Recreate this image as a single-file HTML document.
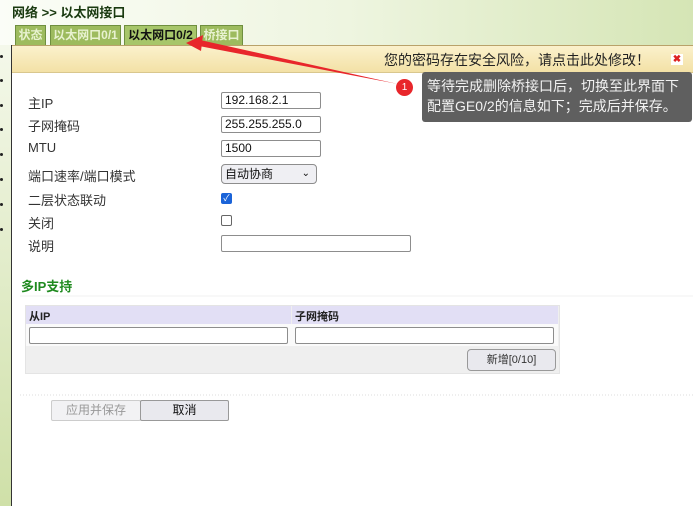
<!DOCTYPE html>
<html><head><meta charset="utf-8"><style>
*{box-sizing:border-box;margin:0;padding:0}
body{width:693px;height:506px;overflow:hidden;position:relative;background:#fff;font-family:"Liberation Sans","Noto Sans CJK SC",sans-serif;font-size:13px;color:#333}
.top{position:absolute;left:0;top:0;width:693px;height:45px;background:linear-gradient(90deg,#fbfdf7 0%,#eef5e0 50%,#d5e5b5 100%)}
.title{position:absolute;left:12px;top:2px;font-weight:bold;font-size:13px;color:#1a3a10}
.left{position:absolute;left:0;top:45px;width:12px;height:461px;background:linear-gradient(180deg,#f4f8ea,#cfe0a8);border-right:1px solid #333}
.dot{position:absolute;left:0;width:3px;height:3px;background:#222;border-radius:50%}
.tab{position:absolute;top:25px;height:20px;background:#9dbb5e;border:1px solid #6f8f3f;border-bottom:none;color:#e8f2d0;font-size:12px;font-weight:bold;line-height:18px;text-align:center;white-space:nowrap;overflow:hidden}
.tab.act{background:#a7c66a;color:#111}
.banner{position:absolute;left:12px;top:45px;width:681px;height:28px;background:linear-gradient(180deg,#fbf1cc,#f3e1a6);border-top:1px solid #b9a26a;border-bottom:1px solid #d9c78e}
.bt{position:absolute;left:372px;top:4px;font-size:14px;color:#222}
.x{position:absolute;left:659px;top:8px;width:12px;height:11px;background:#fff;color:#d22;font-size:10px;line-height:11px;text-align:center;font-weight:bold}
.lbl{position:absolute;left:28px;font-size:13px;color:#333}
.in{position:absolute;left:221px;height:17px;border:1px solid #8d8d8d;border-radius:2px;background:#fff;font-size:12px;padding-left:3px;line-height:15px;color:#111}
.tip{position:absolute;left:422px;top:72px;width:270px;height:50px;background:#5f5f5f;border-radius:3px;color:#f2f2f2;font-size:14px;line-height:20px;padding:4px 0 0 5px}
.badge{position:absolute;left:396px;top:79px;width:17px;height:17px;border-radius:50%;background:#e8262b;color:#fff;font-size:10px;text-align:center;line-height:17px}
.btn{position:absolute;border:1px solid #999;border-radius:2px;background:#e9e9ee;text-align:center;font-size:12px}
</style></head><body>
<div class="top"></div>
<div class="title">网络 &gt;&gt; 以太网接口</div>
<div class="tab" style="left:15px;width:31px">状态</div>
<div class="tab" style="left:50px;width:71px">以太网口0/1</div>
<div class="tab act" style="left:124px;width:73px">以太网口0/2</div>
<div class="tab" style="left:200px;width:43px">桥接口</div>
<div class="left"></div>
<div class="dot" style="top:55px"></div><div class="dot" style="top:79px"></div><div class="dot" style="top:104px"></div><div class="dot" style="top:128px"></div><div class="dot" style="top:153px"></div><div class="dot" style="top:178px"></div><div class="dot" style="top:203px"></div><div class="dot" style="top:228px"></div>
<div class="banner"><div class="bt">您的密码存在安全风险，请点击此处修改！</div><div class="x">✖</div></div>
<svg style="position:absolute;left:0;top:0" width="693" height="506">
<polygon points="398,84 200,40 199,46" fill="#e8262b"/>
<polygon points="186,43 203,35 201,51" fill="#e8262b"/>
<line x1="20" y1="296" x2="693" y2="296" stroke="#f0f0f0"/>
<line x1="20" y1="395" x2="693" y2="395" stroke="#ddd" stroke-dasharray="1,2"/>
</svg>
<div class="badge">1</div>
<div class="tip">等待完成删除桥接口后，切换至此界面下<br>配置GE0/2的信息如下；完成后并保存。</div>
<div class="lbl" style="top:93px">主IP</div><div class="in" style="top:92px;width:100px">192.168.2.1</div>
<div class="lbl" style="top:116px">子网掩码</div><div class="in" style="top:116px;width:100px">255.255.255.0</div>
<div class="lbl" style="top:140px">MTU</div><div class="in" style="top:140px;width:100px">1500</div>
<div class="lbl" style="top:166px">端口速率/端口模式</div><div class="in" style="top:164px;width:96px;height:20px;background:#efeff3;border-radius:4px;line-height:18px">自动协商<span style="position:absolute;right:6px;font-size:10px">&#8964;</span></div>
<div class="lbl" style="top:190px">二层状态联动</div><div style="position:absolute;left:221px;top:193px;width:11px;height:11px;background:#1a63d8;border-radius:2px;color:#fff;font-size:9px;line-height:11px;text-align:center">✓</div>
<div class="lbl" style="top:213px">关闭</div><div style="position:absolute;left:221px;top:215px;width:11px;height:11px;border:1px solid #666;border-radius:2px"></div>
<div class="lbl" style="top:236px">说明</div><div class="in" style="top:235px;width:190px"></div>
<div style="position:absolute;left:21px;top:276px;font-weight:bold;color:#1f8a1f;font-size:13px">多IP支持</div>
<div style="position:absolute;left:25px;top:305px;width:535px;height:69px;background:#efefef;border:1px solid #e4e4e4"></div>
<div style="position:absolute;left:26px;top:306px;width:265px;height:18px;background:#e2dff5;font-weight:bold;font-size:11px;color:#222;padding:2px 3px">从IP</div>
<div style="position:absolute;left:292px;top:306px;width:266px;height:18px;background:#e2dff5;font-weight:bold;font-size:11px;color:#222;padding:2px 3px">子网掩码</div>
<div style="position:absolute;left:26px;top:324px;width:532px;height:22px;background:#fafafa"></div>
<div class="in" style="left:29px;top:327px;width:259px"></div>
<div class="in" style="left:295px;top:327px;width:259px"></div>
<div class="btn" style="left:467px;top:349px;width:89px;height:22px;line-height:20px;font-size:11px;border-radius:4px">新增[0/10]</div>
<div class="btn" style="left:51px;top:400px;width:90px;height:21px;line-height:19px;color:#999;background:#f2f2f4;border-color:#ccc">应用并保存</div>
<div class="btn" style="left:140px;top:400px;width:89px;height:21px;line-height:19px;color:#111">取消</div>
</body></html>
